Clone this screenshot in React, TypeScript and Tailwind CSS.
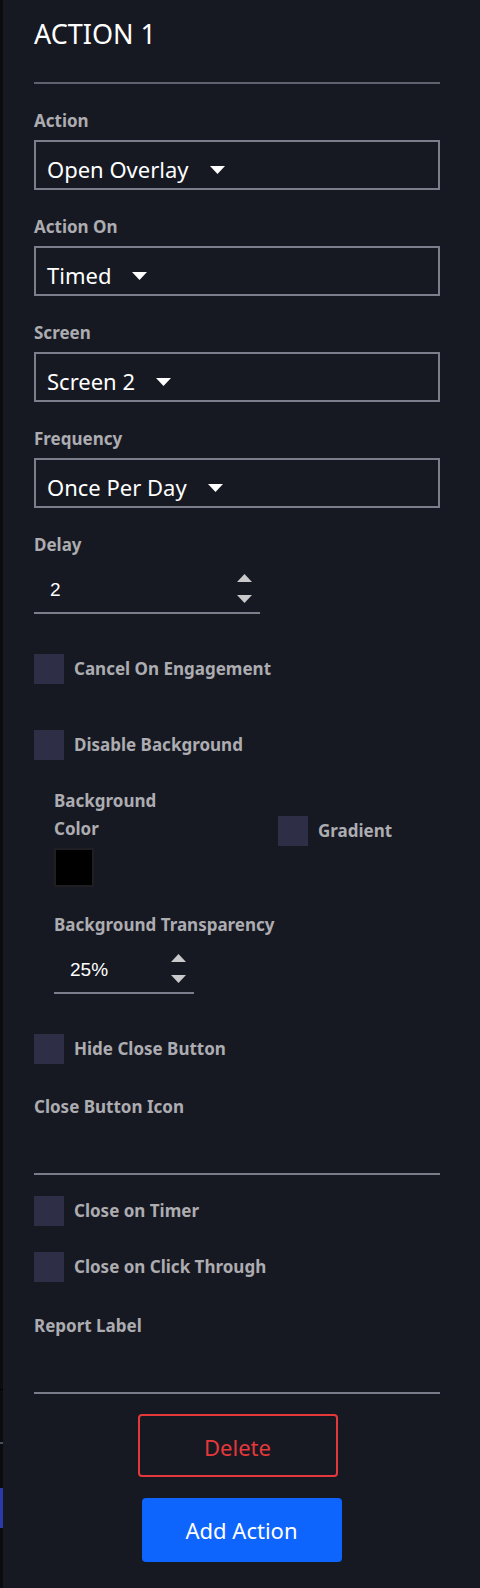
import React from "react";

function Caret() {
  return (
    <svg width="15" height="8" viewBox="0 0 15 8" className="ml-[21px] mt-[3px] shrink-0">
      <polygon points="0,0 15,0 7.5,8" fill="#ffffff" />
    </svg>
  );
}

function SelectField({ label, value }: { label: string; value: string }) {
  return (
    <div className="mt-[25px] flex flex-col">
      <div className="h-[24px] text-[17px] font-bold leading-[24px] text-[#acacb1]">{label}</div>
      <div className="mt-[7px] flex h-[50px] items-center border-2 border-[#7c7f8b] pl-[11px] pt-[7px]">
        <span className="text-[22px] leading-[30px] text-white">{value}</span>
        <Caret />
      </div>
    </div>
  );
}

function Spinner() {
  return (
    <svg width="15" height="29" viewBox="0 0 15 29" className="shrink-0">
      <polygon points="7.5,0 15,8 0,8" fill="#c9c9cc" />
      <polygon points="0,21 15,21 7.5,29" fill="#c9c9cc" />
    </svg>
  );
}

function NumberInput({ value, width }: { value: string; width: string }) {
  return (
    <div
      className={`mt-[7px] flex h-[50px] items-center justify-between border-b-2 border-[#7c7f8b] pl-[16px] pr-[8px] ${width}`}
    >
      <span className="mt-[3px] font-['Liberation_Sans',Arial,sans-serif] text-[19px] leading-[24px] text-white">{value}</span>
      <Spinner />
    </div>
  );
}

function Check({ label, mt }: { label: string; mt: string }) {
  return (
    <div className={`flex items-center gap-[10px] ${mt}`}>
      <div className="h-[30px] w-[30px] shrink-0 bg-[#2e2f47]" />
      <span className="text-[17px] font-bold leading-[24px] text-[#acacb1]">{label}</span>
    </div>
  );
}

function Label({ text, mt }: { text: string; mt: string }) {
  return (
    <div className={`h-[24px] text-[17px] font-bold leading-[24px] text-[#acacb1] ${mt}`}>{text}</div>
  );
}

export default function App() {
  return (
    <div className="flex min-h-[1588px] w-[480px] bg-[#171922] font-['Noto_Sans',sans-serif]">
      <div className="flex w-[3px] shrink-0 flex-col bg-[#0b0c10]">
        <div className="h-[1389px]" />
        <div className="h-px bg-black" />
        <div className="h-[52px]" />
        <div className="h-[2px] bg-[#4c4e59]" />
        <div className="h-[44px]" />
        <div className="h-[40px] bg-[#2a3aa6]" />
      </div>

      <div className="flex flex-1 flex-col pl-[31px] pr-[40px] pt-[16px]">
        <div className="h-[36px] text-[27px] leading-[36px] text-white">ACTION 1</div>
        <div className="mt-[30px] h-[2px] bg-[#5f626e]" />

        <SelectField label="Action" value="Open Overlay" />
        <SelectField label="Action On" value="Timed" />
        <SelectField label="Screen" value="Screen 2" />
        <SelectField label="Frequency" value="Once Per Day" />

        <div className="mt-[25px] flex flex-col">
          <Label text="Delay" mt="" />
          <NumberInput value="2" width="w-[226px]" />
        </div>

        <Check label="Cancel On Engagement" mt="mt-[40px]" />
        <Check label="Disable Background" mt="mt-[46px]" />

        <div className="mt-[27px] flex pl-[20px]">
          <div className="flex w-[224px] flex-col">
            <div className="w-[110px] text-[17px] font-bold leading-[28px] text-[#acacb1]">Background Color</div>
            <div className="mt-[5px] h-[39px] w-[40px] border-2 border-[#1f1f23] bg-black" />
          </div>
          <div className="mt-[29px] flex h-[30px] items-center gap-[10px]">
            <div className="h-[30px] w-[30px] shrink-0 bg-[#2e2f47]" />
            <span className="text-[17px] font-bold leading-[24px] text-[#acacb1]">Gradient</span>
          </div>
        </div>

        <div className="mt-[26px] flex flex-col pl-[20px]">
          <Label text="Background Transparency" mt="" />
          <NumberInput value="25%" width="w-[140px]" />
        </div>

        <Check label="Hide Close Button" mt="mt-[40px]" />
        <Label text="Close Button Icon" mt="mt-[31px]" />
        <div className="mt-[54px] h-[2px] bg-[#7a7d89]" />

        <Check label="Close on Timer" mt="mt-[21px]" />
        <Check label="Close on Click Through" mt="mt-[26px]" />
        <Label text="Report Label" mt="mt-[32px]" />
        <div className="mt-[54px] h-[2px] bg-[#7a7d89]" />

        <div className="mt-[20px] flex justify-center">
          <button className="ml-[1px] flex h-[63px] w-[200px] items-center justify-center rounded-[4px] border-2 border-[#e5383b] pt-[4px] text-[22px] text-[#e5383b]">
            Delete
          </button>
        </div>
        <div className="mt-[21px] flex justify-center">
          <button className="ml-[9px] flex h-[64px] w-[200px] items-center justify-center rounded-[4px] bg-[#0d65fd] text-[22px] text-white">
            Add Action
          </button>
        </div>
      </div>
    </div>
  );
}
